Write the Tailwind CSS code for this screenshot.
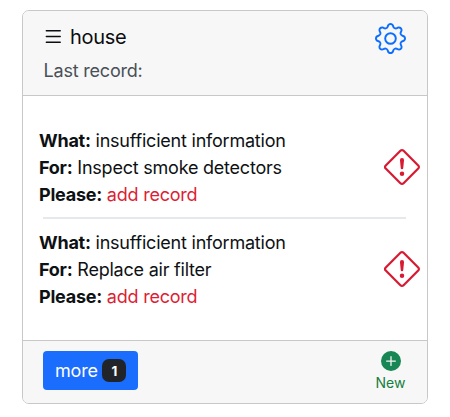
<!DOCTYPE html>
<html lang="en">
<head>
<meta charset="utf-8">
<title>house</title>
<script src="https://cdn.jsdelivr.net/npm/@tailwindcss/browser@4"></script>
</head>
<body class="bg-white font-[Inter,sans-serif] text-[18px] leading-[27px] text-[#212529]">
<main class="pl-[22px] pt-[10px]">
  <article class="flex h-[394px] w-[406px] flex-col overflow-hidden rounded-[7px] border border-[#c8c8c8] bg-white">
    <header class="flex h-[85px] shrink-0 justify-between border-b border-[#c8c8c8] bg-[#f7f7f7] pl-5 pr-[21px]">
      <div class="pt-[10px]">
        <h1 class="flex h-[32px] items-center text-[20px] tracking-[-0.3px] text-[#0b0d10]">
          <svg class="-ml-px -mt-[2px] mr-[5px] size-[23px]" viewBox="0 0 16 16" fill="none" stroke="currentColor" stroke-width=".95" stroke-linecap="round"><path d="M3 4h9.7M3 8h9.7M3 12h9.7"/></svg>
          house
        </h1>
        <p class="ml-[0.5px] mt-[4px] tracking-[-0.2px] text-[#495057]">Last record:</p>
      </div>
      <svg class="mt-[12px] size-[31px] text-[#0d6efd]" viewBox="0 0 16 16" fill="currentColor"><path d="M8 4.754a3.246 3.246 0 1 0 0 6.492 3.246 3.246 0 0 0 0-6.492zM5.754 8a2.246 2.246 0 1 1 4.492 0 2.246 2.246 0 0 1-4.492 0z"/><path d="M9.796 1.343c-.527-1.79-3.065-1.79-3.592 0l-.094.319a.873.873 0 0 1-1.255.52l-.292-.16c-1.64-.892-3.433.902-2.54 2.541l.159.292a.873.873 0 0 1-.52 1.255l-.319.094c-1.79.527-1.79 3.065 0 3.592l.319.094a.873.873 0 0 1 .52 1.255l-.16.292c-.892 1.64.901 3.434 2.541 2.54l.292-.159a.873.873 0 0 1 1.255.52l.094.319c.527 1.79 3.065 1.79 3.592 0l.094-.319a.873.873 0 0 1 1.255-.52l.292.16c1.64.893 3.434-.902 2.54-2.541l-.159-.292a.873.873 0 0 1 .52-1.255l.319-.094c1.79-.527 1.79-3.065 0-3.592l-.319-.094a.873.873 0 0 1-.52-1.255l.16-.292c.893-1.64-.902-3.433-2.541-2.54l-.292.159a.873.873 0 0 1-1.255-.52l-.094-.319zm-2.633.283c.246-.835 1.428-.835 1.674 0l.094.319a1.873 1.873 0 0 0 2.693 1.115l.291-.16c.764-.415 1.6.42 1.184 1.185l-.159.292a1.873 1.873 0 0 0 1.116 2.692l.318.094c.835.246.835 1.428 0 1.674l-.319.094a1.873 1.873 0 0 0-1.115 2.693l.16.291c.415.764-.42 1.6-1.185 1.184l-.291-.159a1.873 1.873 0 0 0-2.693 1.116l-.094.318c-.246.835-1.428.835-1.674 0l-.094-.319a1.873 1.873 0 0 0-2.692-1.115l-.292.16c-.764.415-1.6-.42-1.184-1.185l.159-.291A1.873 1.873 0 0 0 1.945 8.93l-.319-.094c-.835-.246-.835-1.428 0-1.674l.319-.094A1.873 1.873 0 0 0 3.06 4.377l-.16-.292c-.415-.764.42-1.6 1.185-1.184l.292.159a1.873 1.873 0 0 0 2.692-1.115l.094-.319z"/></svg>
    </header>
    <section class="flex-1 pl-4 pr-[7px] pt-[31px] tracking-[-0.22px] text-[#0e1114]">
      <div class="flex items-start justify-between">
        <div>
          <p><b class="tracking-[-0.25px]">What:</b> insufficient information</p>
          <p><b class="tracking-[-0.25px]">For:</b> Inspect smoke detectors</p>
          <p><b class="tracking-[-0.25px]">Please:</b> <span class="text-[#dc1e35]">add record</span></p>
        </div>
        <svg class="mt-[22px] size-[36px] text-[#d81b33]" viewBox="0 0 16 16" fill="currentColor"><path d="M6.95.435c.58-.58 1.52-.58 2.1 0l6.515 6.516c.58.58.58 1.519 0 2.098L9.05 15.565c-.58.58-1.519.58-2.098 0L.435 9.05a1.482 1.482 0 0 1 0-2.098L6.95.435zm1.4.7a.495.495 0 0 0-.7 0L1.134 7.65a.495.495 0 0 0 0 .7l6.516 6.516a.495.495 0 0 0 .7 0l6.516-6.516a.495.495 0 0 0 0-.7L8.35 1.134z"/><path d="M7.002 11a1 1 0 1 1 2 0 1 1 0 0 1-2 0zM7.1 4.995a.905.905 0 1 1 1.8 0l-.35 3.507a.552.552 0 0 1-1.1 0L7.1 4.995z"/></svg>
      </div>
      <hr class="mb-[10px] ml-1 mr-[14px] mt-[9px] h-[2px] border-0 bg-[#e6e9ec]">
      <div class="flex items-start justify-between">
        <div>
          <p><b class="tracking-[-0.25px]">What:</b> insufficient information</p>
          <p><b class="tracking-[-0.25px]">For:</b> Replace air filter</p>
          <p><b class="tracking-[-0.25px]">Please:</b> <span class="text-[#dc1e35]">add record</span></p>
        </div>
        <svg class="mt-[22px] size-[36px] text-[#d81b33]" viewBox="0 0 16 16" fill="currentColor"><path d="M6.95.435c.58-.58 1.52-.58 2.1 0l6.515 6.516c.58.58.58 1.519 0 2.098L9.05 15.565c-.58.58-1.519.58-2.098 0L.435 9.05a1.482 1.482 0 0 1 0-2.098L6.95.435zm1.4.7a.495.495 0 0 0-.7 0L1.134 7.65a.495.495 0 0 0 0 .7l6.516 6.516a.495.495 0 0 0 .7 0l6.516-6.516a.495.495 0 0 0 0-.7L8.35 1.134z"/><path d="M7.002 11a1 1 0 1 1 2 0 1 1 0 0 1-2 0zM7.1 4.995a.905.905 0 1 1 1.8 0l-.35 3.507a.552.552 0 0 1-1.1 0L7.1 4.995z"/></svg>
      </div>
    </section>
    <footer class="flex h-[63px] shrink-0 items-start justify-between border-t border-[#c8c8c8] bg-[#f7f7f7] pl-[20px] pr-[21px] pt-[10px]">
      <button class="flex h-[39px] w-[95px] items-center rounded-[4px] bg-[#1a6dfd] pl-[12px] tracking-[-0.2px] text-white">more<span class="ml-[4.5px] flex h-[23px] w-[24px] items-center justify-center rounded-[7px] bg-[#212529] pt-[2px] text-[13.5px] font-bold leading-none">1</span></button>
      <div class="flex w-[31px] flex-col items-center text-[#198754]">
        <svg class="size-[20px]" viewBox="0 0 16 16" fill="currentColor"><path d="M16 8A8 8 0 1 1 0 8a8 8 0 0 1 16 0zM8.5 4.5a.5.5 0 0 0-1 0v3h-3a.5.5 0 0 0 0 1h3v3a.5.5 0 0 0 1 0v-3h3a.5.5 0 0 0 0-1h-3v-3z"/></svg>
        <span class="mt-[2px] text-[14px] leading-[20px] text-[#148040]">New</span>
      </div>
    </footer>
  </article>
</main>
</body>
</html>
